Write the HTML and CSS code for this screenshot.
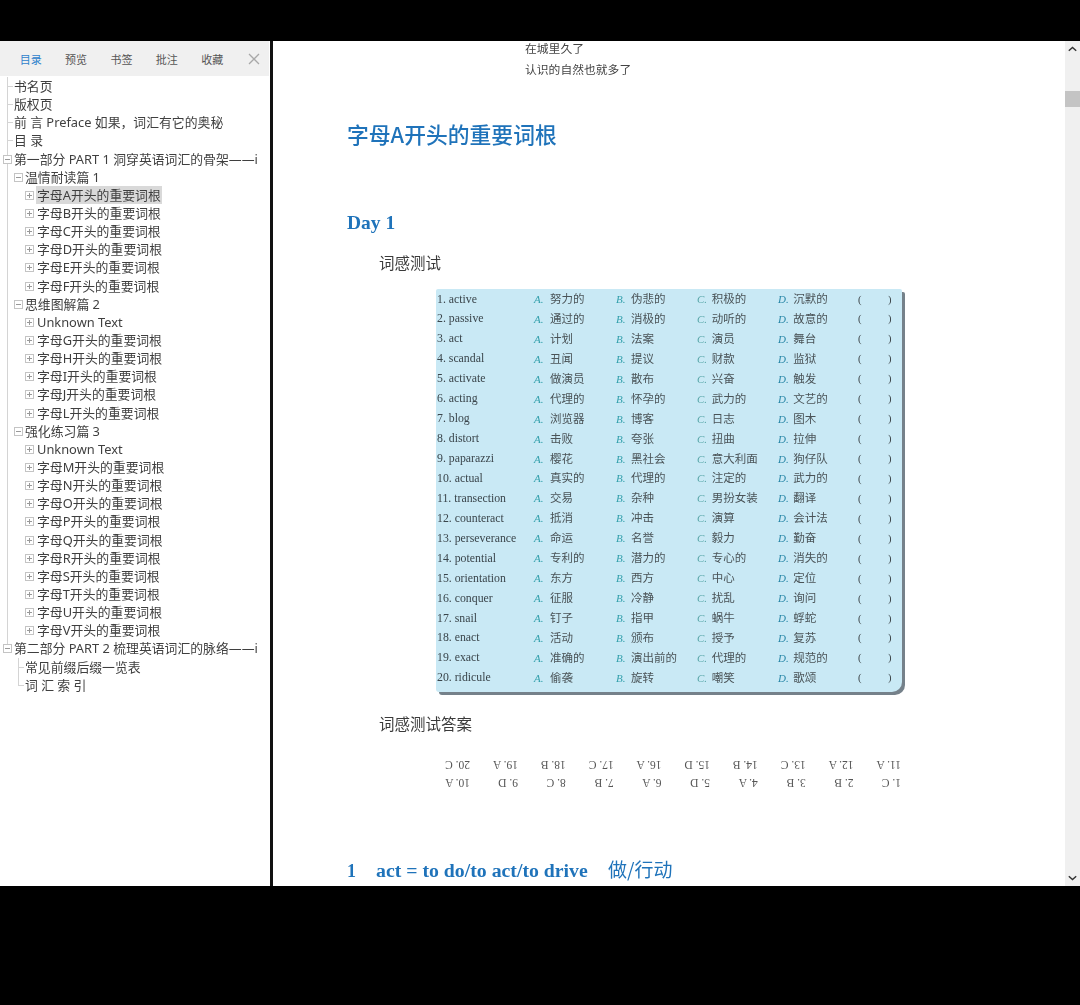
FILE: index.html
```html
<!DOCTYPE html>
<html lang="zh">
<head>
<meta charset="utf-8">
<title>字母A开头的重要词根</title>
<link rel="stylesheet" href="styles.css">
</head>
<body>
<div class="app">
  <aside class="sidebar">
    <nav class="tabs">
      <span class="tab active">目录</span><span class="tab">预览</span><span class="tab">书签</span><span class="tab">批注</span><span class="tab">收藏</span>
      <svg class="close" width="12" height="12" viewBox="0 0 12 12"><path d="M1 1l10 10M11 1L1 11" stroke="#a8a8a8" stroke-width="1.3" fill="none"/></svg>
    </nav>
    <div class="tree">
      <div class="row l0 leaf"><span class="label">书名页</span></div>
      <div class="row l0 leaf"><span class="label">版权页</span></div>
      <div class="row l0 leaf"><span class="label">前 言 Preface 如果，词汇有它的奥秘</span></div>
      <div class="row l0 leaf"><span class="label">目 录</span></div>
      <div class="row l0 minus"><span class="label">第一部分 PART 1 洞穿英语词汇的骨架——i</span></div>
      <div class="row l1 minus"><span class="label">温情耐读篇 1</span></div>
      <div class="row l2 plus"><span class="label selected">字母A开头的重要词根</span></div>
      <div class="row l2 plus"><span class="label">字母B开头的重要词根</span></div>
      <div class="row l2 plus"><span class="label">字母C开头的重要词根</span></div>
      <div class="row l2 plus"><span class="label">字母D开头的重要词根</span></div>
      <div class="row l2 plus"><span class="label">字母E开头的重要词根</span></div>
      <div class="row l2 plus"><span class="label">字母F开头的重要词根</span></div>
      <div class="row l1 minus"><span class="label">思维图解篇 2</span></div>
      <div class="row l2 plus"><span class="label">Unknown Text</span></div>
      <div class="row l2 plus"><span class="label">字母G开头的重要词根</span></div>
      <div class="row l2 plus"><span class="label">字母H开头的重要词根</span></div>
      <div class="row l2 plus"><span class="label">字母I开头的重要词根</span></div>
      <div class="row l2 plus"><span class="label">字母J开头的重要词根</span></div>
      <div class="row l2 plus"><span class="label">字母L开头的重要词根</span></div>
      <div class="row l1 minus"><span class="label">强化练习篇 3</span></div>
      <div class="row l2 plus"><span class="label">Unknown Text</span></div>
      <div class="row l2 plus"><span class="label">字母M开头的重要词根</span></div>
      <div class="row l2 plus"><span class="label">字母N开头的重要词根</span></div>
      <div class="row l2 plus"><span class="label">字母O开头的重要词根</span></div>
      <div class="row l2 plus"><span class="label">字母P开头的重要词根</span></div>
      <div class="row l2 plus"><span class="label">字母Q开头的重要词根</span></div>
      <div class="row l2 plus"><span class="label">字母R开头的重要词根</span></div>
      <div class="row l2 plus"><span class="label">字母S开头的重要词根</span></div>
      <div class="row l2 plus"><span class="label">字母T开头的重要词根</span></div>
      <div class="row l2 plus"><span class="label">字母U开头的重要词根</span></div>
      <div class="row l2 plus"><span class="label">字母V开头的重要词根</span></div>
      <div class="row l0 minus end"><span class="label">第二部分 PART 2 梳理英语词汇的脉络——i</span></div>
      <div class="row l1 leaf tail"><span class="label">常见前缀后缀一览表</span></div>
      <div class="row l1 leaf tail"><span class="label">词 汇 索 引</span></div>
    </div>
  </aside>
  <main class="reader">
    <article class="page">
      <p class="quote">在城里久了</p>
      <p class="quote">认识的自然也就多了</p>
      <h1 class="title">字母A开头的重要词根</h1>
      <h2 class="day">Day 1</h2>
      <h3 class="sub">词感测试</h3>
      <div class="quiz">
        <div class="q"><span class="w">1. active</span><span class="o"><i class="a">A.</i> 努力的</span><span class="o"><i class="b">B.</i> 伪悲的</span><span class="o"><i class="c">C.</i> 积极的</span><span class="o"><i class="d">D.</i> 沉默的</span><span class="p">(</span><span class="p">)</span></div>
        <div class="q"><span class="w">2. passive</span><span class="o"><i class="a">A.</i> 通过的</span><span class="o"><i class="b">B.</i> 消极的</span><span class="o"><i class="c">C.</i> 动听的</span><span class="o"><i class="d">D.</i> 故意的</span><span class="p">(</span><span class="p">)</span></div>
        <div class="q"><span class="w">3. act</span><span class="o"><i class="a">A.</i> 计划</span><span class="o"><i class="b">B.</i> 法案</span><span class="o"><i class="c">C.</i> 演员</span><span class="o"><i class="d">D.</i> 舞台</span><span class="p">(</span><span class="p">)</span></div>
        <div class="q"><span class="w">4. scandal</span><span class="o"><i class="a">A.</i> 丑闻</span><span class="o"><i class="b">B.</i> 提议</span><span class="o"><i class="c">C.</i> 财款</span><span class="o"><i class="d">D.</i> 监狱</span><span class="p">(</span><span class="p">)</span></div>
        <div class="q"><span class="w">5. activate</span><span class="o"><i class="a">A.</i> 做演员</span><span class="o"><i class="b">B.</i> 散布</span><span class="o"><i class="c">C.</i> 兴奋</span><span class="o"><i class="d">D.</i> 触发</span><span class="p">(</span><span class="p">)</span></div>
        <div class="q"><span class="w">6. acting</span><span class="o"><i class="a">A.</i> 代理的</span><span class="o"><i class="b">B.</i> 怀孕的</span><span class="o"><i class="c">C.</i> 武力的</span><span class="o"><i class="d">D.</i> 文艺的</span><span class="p">(</span><span class="p">)</span></div>
        <div class="q"><span class="w">7. blog</span><span class="o"><i class="a">A.</i> 浏览器</span><span class="o"><i class="b">B.</i> 博客</span><span class="o"><i class="c">C.</i> 日志</span><span class="o"><i class="d">D.</i> 图木</span><span class="p">(</span><span class="p">)</span></div>
        <div class="q"><span class="w">8. distort</span><span class="o"><i class="a">A.</i> 击败</span><span class="o"><i class="b">B.</i> 夸张</span><span class="o"><i class="c">C.</i> 扭曲</span><span class="o"><i class="d">D.</i> 拉伸</span><span class="p">(</span><span class="p">)</span></div>
        <div class="q"><span class="w">9. paparazzi</span><span class="o"><i class="a">A.</i> 樱花</span><span class="o"><i class="b">B.</i> 黑社会</span><span class="o"><i class="c">C.</i> 意大利面</span><span class="o"><i class="d">D.</i> 狗仔队</span><span class="p">(</span><span class="p">)</span></div>
        <div class="q"><span class="w">10. actual</span><span class="o"><i class="a">A.</i> 真实的</span><span class="o"><i class="b">B.</i> 代理的</span><span class="o"><i class="c">C.</i> 注定的</span><span class="o"><i class="d">D.</i> 武力的</span><span class="p">(</span><span class="p">)</span></div>
        <div class="q"><span class="w">11. transection</span><span class="o"><i class="a">A.</i> 交易</span><span class="o"><i class="b">B.</i> 杂种</span><span class="o"><i class="c">C.</i> 男扮女装</span><span class="o"><i class="d">D.</i> 翻译</span><span class="p">(</span><span class="p">)</span></div>
        <div class="q"><span class="w">12. counteract</span><span class="o"><i class="a">A.</i> 抵消</span><span class="o"><i class="b">B.</i> 冲击</span><span class="o"><i class="c">C.</i> 演算</span><span class="o"><i class="d">D.</i> 会计法</span><span class="p">(</span><span class="p">)</span></div>
        <div class="q"><span class="w">13. perseverance</span><span class="o"><i class="a">A.</i> 命运</span><span class="o"><i class="b">B.</i> 名誉</span><span class="o"><i class="c">C.</i> 毅力</span><span class="o"><i class="d">D.</i> 勤奋</span><span class="p">(</span><span class="p">)</span></div>
        <div class="q"><span class="w">14. potential</span><span class="o"><i class="a">A.</i> 专利的</span><span class="o"><i class="b">B.</i> 潜力的</span><span class="o"><i class="c">C.</i> 专心的</span><span class="o"><i class="d">D.</i> 消失的</span><span class="p">(</span><span class="p">)</span></div>
        <div class="q"><span class="w">15. orientation</span><span class="o"><i class="a">A.</i> 东方</span><span class="o"><i class="b">B.</i> 西方</span><span class="o"><i class="c">C.</i> 中心</span><span class="o"><i class="d">D.</i> 定位</span><span class="p">(</span><span class="p">)</span></div>
        <div class="q"><span class="w">16. conquer</span><span class="o"><i class="a">A.</i> 征服</span><span class="o"><i class="b">B.</i> 冷静</span><span class="o"><i class="c">C.</i> 扰乱</span><span class="o"><i class="d">D.</i> 询问</span><span class="p">(</span><span class="p">)</span></div>
        <div class="q"><span class="w">17. snail</span><span class="o"><i class="a">A.</i> 钉子</span><span class="o"><i class="b">B.</i> 指甲</span><span class="o"><i class="c">C.</i> 蜗牛</span><span class="o"><i class="d">D.</i> 蜉蛇</span><span class="p">(</span><span class="p">)</span></div>
        <div class="q"><span class="w">18. enact</span><span class="o"><i class="a">A.</i> 活动</span><span class="o"><i class="b">B.</i> 颁布</span><span class="o"><i class="c">C.</i> 授予</span><span class="o"><i class="d">D.</i> 复苏</span><span class="p">(</span><span class="p">)</span></div>
        <div class="q"><span class="w">19. exact</span><span class="o"><i class="a">A.</i> 准确的</span><span class="o"><i class="b">B.</i> 演出前的</span><span class="o"><i class="c">C.</i> 代理的</span><span class="o"><i class="d">D.</i> 规范的</span><span class="p">(</span><span class="p">)</span></div>
        <div class="q"><span class="w">20. ridicule</span><span class="o"><i class="a">A.</i> 偷袭</span><span class="o"><i class="b">B.</i> 旋转</span><span class="o"><i class="c">C.</i> 嘲笑</span><span class="o"><i class="d">D.</i> 歌颂</span><span class="p">(</span><span class="p">)</span></div>
      </div>
      <h3 class="sub answers-title">词感测试答案</h3>
      <div class="answers">
        <span>1. C</span><span>2. B</span><span>3. B</span><span>4. A</span><span>5. D</span><span>6. A</span><span>7. B</span><span>8. C</span><span>9. D</span><span>10. A</span>
        <span>11. A</span><span>12. A</span><span>13. C</span><span>14. B</span><span>15. D</span><span>16. A</span><span>17. C</span><span>18. B</span><span>19. A</span><span>20. C</span>
      </div>
      <h2 class="root"><span class="num">1</span><span class="en">act = to do/to act/to drive</span><span class="zh">做/行动</span></h2>
    </article>
    <div class="scrollbar">
      <svg width="9" height="6" viewBox="0 0 9 6"><path d="M.8 4.8L4.5 1.4l3.7 3.4" stroke="#333" stroke-width="1.4" fill="none"/></svg>
      <div class="track"><div class="thumb"></div></div>
      <svg width="9" height="6" viewBox="0 0 9 6"><path d="M.8 1.2L4.5 4.6l3.7-3.4" stroke="#333" stroke-width="1.4" fill="none"/></svg>
    </div>
  </main>
</div>
</body>
</html>
```
FILE: styles.css
```css
* { box-sizing: border-box; }
html, body { margin: 0; height: 100%; background: #000; }
body { padding-top: 41px; overflow: hidden; font-family: "Noto Sans CJK SC", "Noto Sans", sans-serif; }

.app { display: flex; height: 845px; width: 1080px; background: #fff; filter: blur(.45px); }

.sidebar { width: 270px; flex: none; background: #fff; display: flex; flex-direction: column; }
.tabs { height: 35px; flex: none; display: flex; align-items: center; padding-left: 8px; background: #f0f0f0; width: 269px; }
.tab { width: 45.4px; text-align: center; font-size: 11px; color: #555; }
.tab.active { color: #2f82cc; }
.close { margin-left: 13px; }

.tree { padding-top: 1px; }
.row { height: 18.15px; display: flex; align-items: center; font-family: "Noto Sans", "Noto Sans CJK SC", sans-serif; font-size: 12.85px; line-height: 18px; color: #3f3f3f; white-space: nowrap; background-repeat: no-repeat; }
.label { display: block; height: 18px; padding-right: 1px; }
.selected { background: #d9d9d9; }
.l0 { padding-left: 14px; }
.l1 { padding-left: 25px; }
.l2 { padding-left: 37px; }
.l2 .selected { margin-left: -1px; padding-left: 1px; }

/* guide lines and expander boxes */
.row { --ln: #d4d4d4; --box: url("data:image/svg+xml,%3Csvg xmlns='http://www.w3.org/2000/svg' width='9' height='9'%3E%3Crect x='.5' y='.5' width='8' height='8' fill='%23fff' stroke='%23c4c4c4'/%3E%3Cpath d='M2 4.5h5' stroke='%23999'/%3E%3C/svg%3E");
  --boxp: url("data:image/svg+xml,%3Csvg xmlns='http://www.w3.org/2000/svg' width='9' height='9'%3E%3Crect x='.5' y='.5' width='8' height='8' fill='%23fff' stroke='%23c4c4c4'/%3E%3Cpath d='M2 4.5h5M4.5 2v5' stroke='%23999'/%3E%3C/svg%3E"); }
.l0.leaf { background-image: linear-gradient(var(--ln), var(--ln)), linear-gradient(var(--ln), var(--ln)); background-size: 1px 100%, 6px 1px; background-position: 7px 0, 7px 9px; }
.l0.minus { background-image: var(--box), linear-gradient(var(--ln), var(--ln)); background-size: 9px 9px, 1px 100%; background-position: 3px 5px, 7px 0; }
.l0.end { background-image: var(--box), linear-gradient(var(--ln), var(--ln)); background-size: 9px 9px, 1px 9px; background-position: 3px 5px, 7px 0; }
.l1.minus { background-image: var(--box), linear-gradient(var(--ln), var(--ln)); background-size: 9px 9px, 1px 100%; background-position: 14px 5px, 7px 0; }
.l2.plus { background-image: var(--boxp), linear-gradient(var(--ln), var(--ln)); background-size: 9px 9px, 1px 100%; background-position: 25px 5px, 7px 0; }
.l1.tail { background-image: linear-gradient(var(--ln), var(--ln)), linear-gradient(var(--ln), var(--ln)); background-size: 1px 100%, 6px 1px; background-position: 18px 0, 18px 9px; }
.l1.tail:last-child { background-size: 1px 10px, 6px 1px; }

.reader { flex: 1; min-width: 0; display: flex; border-left: 3px solid #111; background: #fff; }
.page { flex: 1; min-width: 0; padding: 0 0 0 74px; color: #333; }

.quote { margin: 0 0 0 178px; height: 21px; line-height: 14px; font-size: 11.8px; color: #444; }
.title { margin: 0; padding-top: 32px; height: 87px; font-size: 21.8px; line-height: 38px; font-weight: 500; color: #1f73ba; }
.day { margin: 39px 0 0; height: 27px; font: bold 19.5px/27px "Liberation Serif", serif; color: #1f73ba; }
.sub { margin: 0 0 0 32px; font-size: 15.5px; line-height: 22px; font-weight: 400; color: #3a3a3a; }
.day + .sub { margin-top: 15px; }

.quiz { margin: 16px 0 0 89px; width: 466px; height: 403px; padding: 0 0 0 1px; background: #c9e9f5; border-radius: 2px 2px 10px 3px; box-shadow: 3px 3px 0 #75818a; }
.q { height: 19.95px; display: grid; grid-template-columns: 97px 82px 81px 81px 80px 30px 10px; align-items: center; font-size: 11.5px; line-height: 19px; color: #4a5357; white-space: nowrap; }
.w { font: 11.8px/19px "Liberation Serif", serif; color: #3a454b; }
.o i { font: italic 11px/19px "Liberation Serif", serif; margin-right: 4px; }
.o .a { color: #33a0ac; }
.o .b { color: #33a0ac; margin-right: 3px; }
.o .c { color: #58a6a8; margin-right: 2px; }
.o .d { color: #2a88a8; margin-right: 2px; }
.p { font: 10.5px/19px "Liberation Serif", serif; color: #3b4347; }

.answers-title { margin-top: 20px; }
.answers { margin: 24px 0 0 98px; width: 456px; display: grid; grid-template-columns: repeat(10, auto); justify-content: space-between; row-gap: 4px; transform: rotate(180deg); font: 11.5px/14px "Liberation Serif", serif; color: #555; }

.root { margin: 66px 0 0; display: flex; align-items: baseline; color: #1f73ba; white-space: nowrap; }
.num { width: 29px; font: bold 18px/26px "Liberation Serif", serif; }
.en { width: 232px; font: bold 19.8px/26px "Liberation Serif", serif; }
.zh { font-size: 19px; line-height: 26px; font-weight: 400; }

.scrollbar { width: 15px; flex: none; background: #f0f0f0; display: flex; flex-direction: column; align-items: center; padding: 5px 0; }
.track { flex: 1; width: 100%; padding-top: 39px; }
.thumb { height: 16px; background: #c4c4c4; }
```
